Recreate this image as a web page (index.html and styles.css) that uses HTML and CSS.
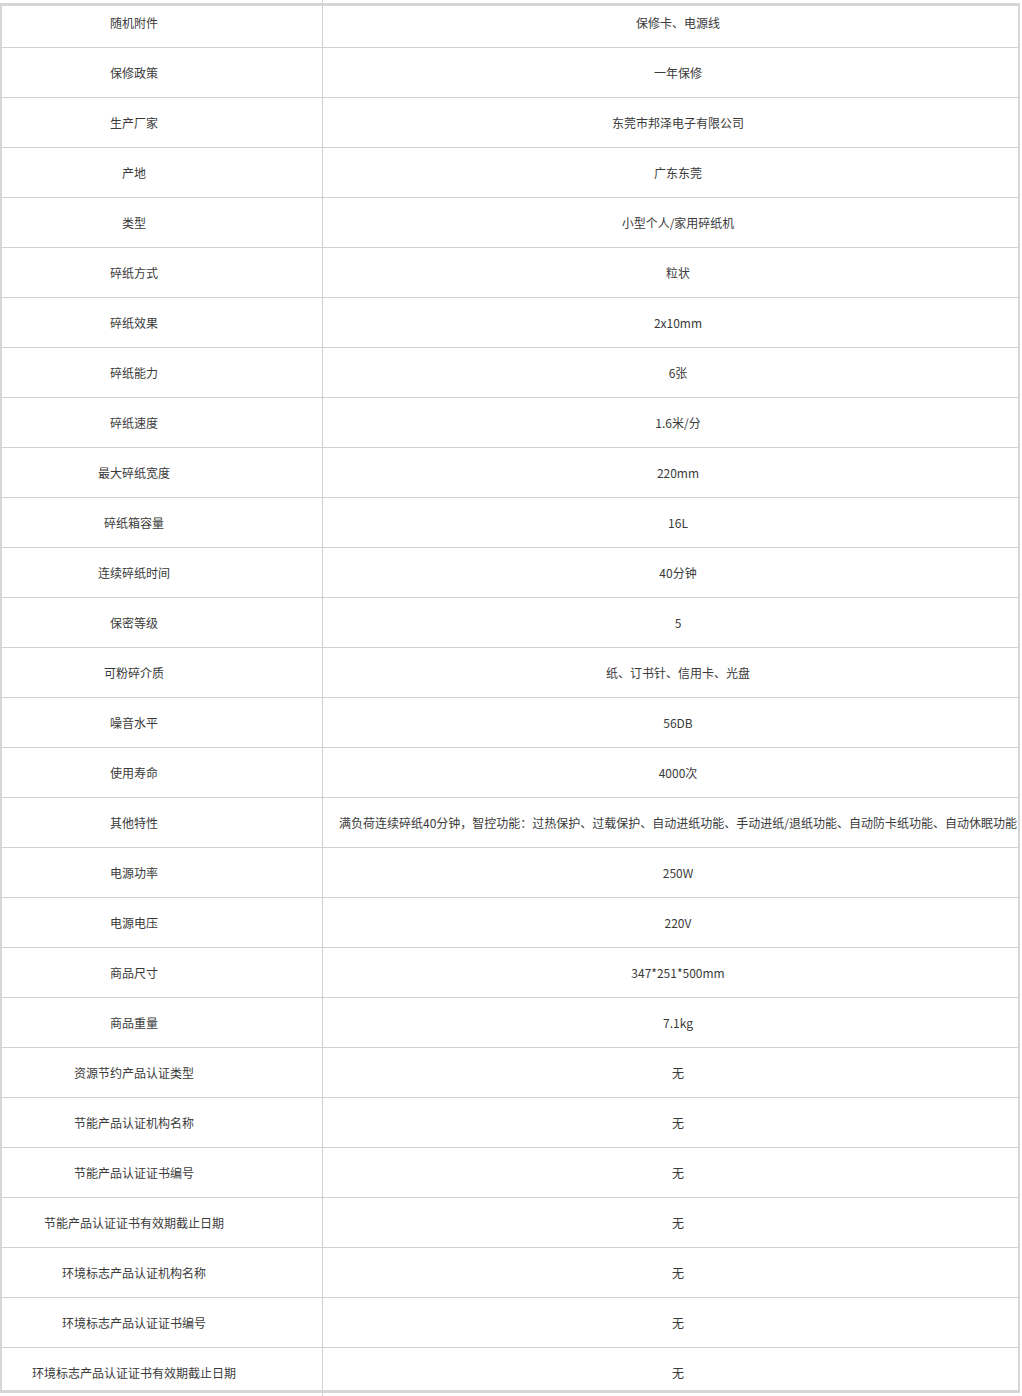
FILE: index.html
```html
<!DOCTYPE html>
<html lang="zh-CN">
<head>
<meta charset="utf-8">
<title>规格参数</title>
<link rel="stylesheet" href="styles.css">
</head>
<body>
<div class="page">
  <div class="frame">
    <div class="rows">
      <div class="row"><div class="k">随机附件</div><div class="v">保修卡、电源线</div></div>
      <div class="row"><div class="k">保修政策</div><div class="v">一年保修</div></div>
      <div class="row"><div class="k">生产厂家</div><div class="v">东莞市邦泽电子有限公司</div></div>
      <div class="row"><div class="k">产地</div><div class="v">广东东莞</div></div>
      <div class="row"><div class="k">类型</div><div class="v">小型个人/家用碎纸机</div></div>
      <div class="row"><div class="k">碎纸方式</div><div class="v">粒状</div></div>
      <div class="row"><div class="k">碎纸效果</div><div class="v">2x10mm</div></div>
      <div class="row"><div class="k">碎纸能力</div><div class="v">6张</div></div>
      <div class="row"><div class="k">碎纸速度</div><div class="v">1.6米/分</div></div>
      <div class="row"><div class="k">最大碎纸宽度</div><div class="v">220mm</div></div>
      <div class="row"><div class="k">碎纸箱容量</div><div class="v">16L</div></div>
      <div class="row"><div class="k">连续碎纸时间</div><div class="v">40分钟</div></div>
      <div class="row"><div class="k">保密等级</div><div class="v">5</div></div>
      <div class="row"><div class="k">可粉碎介质</div><div class="v">纸、订书针、信用卡、光盘</div></div>
      <div class="row"><div class="k">噪音水平</div><div class="v">56DB</div></div>
      <div class="row"><div class="k">使用寿命</div><div class="v">4000次</div></div>
      <div class="row"><div class="k">其他特性</div><div class="v">满负荷连续碎纸40分钟，智控功能：过热保护、过载保护、自动进纸功能、手动进纸/退纸功能、自动防卡纸功能、自动休眠功能</div></div>
      <div class="row"><div class="k">电源功率</div><div class="v">250W</div></div>
      <div class="row"><div class="k">电源电压</div><div class="v">220V</div></div>
      <div class="row"><div class="k">商品尺寸</div><div class="v">347*251*500mm</div></div>
      <div class="row"><div class="k">商品重量</div><div class="v">7.1kg</div></div>
      <div class="row"><div class="k">资源节约产品认证类型</div><div class="v">无</div></div>
      <div class="row"><div class="k">节能产品认证机构名称</div><div class="v">无</div></div>
      <div class="row"><div class="k">节能产品认证证书编号</div><div class="v">无</div></div>
      <div class="row"><div class="k">节能产品认证证书有效期截止日期</div><div class="v">无</div></div>
      <div class="row"><div class="k">环境标志产品认证机构名称</div><div class="v">无</div></div>
      <div class="row"><div class="k">环境标志产品认证证书编号</div><div class="v">无</div></div>
      <div class="row"><div class="k">环境标志产品认证证书有效期截止日期</div><div class="v">无</div></div>
    </div>
  </div>
</div>
</body>
</html>
```

FILE: styles.css
```css
html, body {
  margin: 0;
  padding: 0;
  background: #fff;
}
body {
  font-family: "Microsoft YaHei", "Noto Sans CJK SC", "Noto Sans", sans-serif;
  font-size: 12px;
  color: #3a3a3a;
}
.page {
  width: 1022px;
  height: 1396px;
  box-sizing: border-box;
  padding: 3px 2px 3px 0;
  background: linear-gradient(to right, transparent 322px, #cfcfcf 322px, #cfcfcf 323px, transparent 323px);
}
.frame {
  height: 1390px;
  box-sizing: border-box;
  border-top: 3px solid #d6d6d6;
  border-bottom: 3px solid #d6d6d6;
  border-left: 2px solid #d6d6d6;
  border-right: 2px solid #d6d6d6;
  background: #fff;
  overflow: hidden;
}
.rows {
  width: 1089px;
  margin-left: -58px;
  margin-top: -8px;
}
.row {
  display: grid;
  grid-template-columns: 379px 710px;
  height: 50px;
  box-sizing: border-box;
  border-bottom: 1px solid #d0d0d0;
}
.k, .v {
  line-height: 49px;
  text-align: center;
  white-space: nowrap;
  overflow: hidden;
}
.k {
  padding-left: 2px;
  border-right: 1px solid #d0d0d0;
}
```
